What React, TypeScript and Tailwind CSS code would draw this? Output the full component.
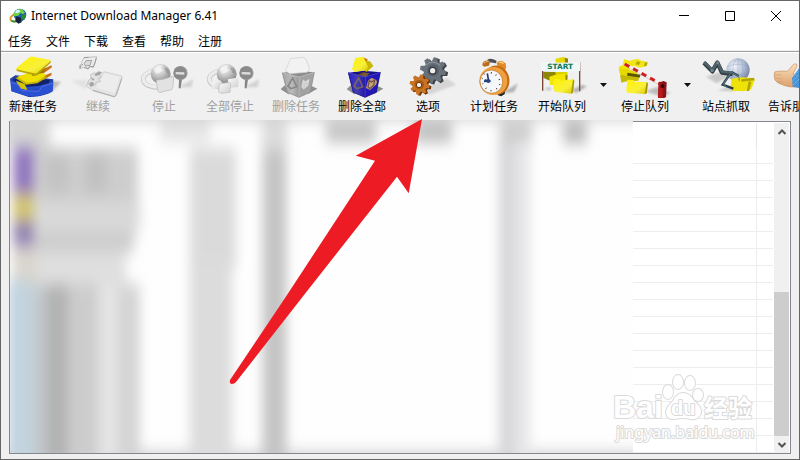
import type { ReactNode } from "react"

const MENU = ["任务", "文件", "下载", "查看", "帮助", "注册"]

interface IconProps {
    viewBox: string
    children: ReactNode
}

function ToolIcon({ viewBox, children }: IconProps) {
    return (
        <svg viewBox={viewBox} className="h-11 w-[60px] shrink-0" aria-hidden="true">
            {children}
        </svg>
    )
}

// gradients and filters shared by all the drawings
function SharedDefs() {
    return (
        <svg className="absolute size-0" aria-hidden="true">
            <defs>
                <linearGradient id="yellow" x1="0" y1="0" x2="1" y2="1">
                    <stop offset="0" stopColor="#fff200" />
                    <stop offset="0.6" stopColor="#f8f03a" />
                    <stop offset="1" stopColor="#d9c400" />
                </linearGradient>
                <linearGradient id="blue" x1="0" y1="0" x2="0" y2="1">
                    <stop offset="0" stopColor="#1c3a9c" />
                    <stop offset="0.5" stopColor="#2a52d0" />
                    <stop offset="1" stopColor="#1a36a8" />
                </linearGradient>
                <linearGradient id="paper" x1="0" y1="0" x2="1" y2="1">
                    <stop offset="0" stopColor="#fbfbfb" />
                    <stop offset="1" stopColor="#cfcfcf" />
                </linearGradient>
                <radialGradient id="ball" cx="0.4" cy="0.25" r="0.75">
                    <stop offset="0" stopColor="#f4f4f4" />
                    <stop offset="0.5" stopColor="#c2c2c2" />
                    <stop offset="1" stopColor="#858585" />
                </radialGradient>
                <linearGradient id="greyGlass" x1="0" y1="0" x2="1" y2="0">
                    <stop offset="0" stopColor="#a6a6a6" />
                    <stop offset="0.6" stopColor="#b9b9b9" />
                    <stop offset="1" stopColor="#969696" />
                </linearGradient>
                <linearGradient id="blueGlass" x1="0" y1="0" x2="1" y2="0">
                    <stop offset="0" stopColor="#2416c8" />
                    <stop offset="0.5" stopColor="#3a36b8" />
                    <stop offset="1" stopColor="#1c10a0" />
                </linearGradient>
                <radialGradient id="globe" cx="0.35" cy="0.35" r="0.75">
                    <stop offset="0" stopColor="#f2f5fb" />
                    <stop offset="0.5" stopColor="#b7c2d8" />
                    <stop offset="1" stopColor="#6d7c9e" />
                </radialGradient>
                <linearGradient id="skin" x1="0" y1="0" x2="0" y2="1">
                    <stop offset="0" stopColor="#fbe0bd" />
                    <stop offset="1" stopColor="#dca06c" />
                </linearGradient>
                <filter id="soft" x="-50%" y="-50%" width="200%" height="200%">
                    <feGaussianBlur stdDeviation="3" />
                </filter>
                <filter id="haze" x="-50%" y="-50%" width="200%" height="200%">
                    <feGaussianBlur stdDeviation="6 8" />
                </filter>
            </defs>
        </svg>
    )
}

function AppLogo() {
    return (
        <svg viewBox="24 21 54 48" className="h-4 w-[18px]" aria-hidden="true">
            <path d="M40 40Q24 48 30 58q12 8 26-2" fill="none" stroke="#d9a030" strokeWidth="6" />
            <path d="M31 59q12 7 24-3" fill="none" stroke="#2a9a3a" strokeWidth="5" />
            <circle cx="57" cy="42" r="19" fill="#1d62b0" />
            <path d="M40 34Q48 22 62 24l10 10-6 6-8-4-6 8-12 2-3-4Z" fill="#6fd044" />
            <path d="M64 42l11-4q-1 14-10 20l-6-8Z" fill="#2b8c32" />
            <path d="M46 28q8-4 12 3l-8 6-8-2Z" fill="#d7f3ff" />
            <path d="M46 46l14 4 2 14-10 4-9-8Z" fill="#14213c" />
        </svg>
    )
}

function AddIcon() {
    return (
        <ToolIcon viewBox="9 12 180 132">
            <path d="M150 92l34 4-30 30-40 8Z" fill="#8f8f8f" opacity="0.55" filter="url(#soft)" />
            <path d="M30 86L46 76 160 88 158 124Q152 130 120 138 90 142 84 140L34 124Z" fill="url(#blue)" />
            <path d="M38 90L56 80 150 90 146 100 116 108 84 110 62 106Z" fill="#12226b" />
            <path d="M120 62l34-16 2 6-28 20ZM122 82l32-14 1 7-26 16Z" fill="#c96f14" />
            <path d="M46 84l52-16 44 14-30 18-34 4Z" fill="#c9b800" />
            <path d="M52 80l52-18 36 12-28 20-32 4Z" fill="#efe000" />
            <path d="M48 92l26 10 8 18-24-5Z" fill="#d6c500" />
            <path d="M92 66l44-12-8 14-30 10Z" fill="#8c7a00" />
            <path d="M49 54L88 22Q96 18 102 21L150 29Q154 31 151 34L114 69Q110 73 106 72L52 60Q46 58 49 54Z" fill="url(#yellow)" />
            <path d="M50 58l58 13 44-38 1 4-43 40-60-14Z" fill="#b8a500" />
            <path d="M32 94l22 8 12 18 50 2 10-15 34-10-2 26-38 14-34 2-50-15Z" fill="#2b50d2" />
            <path d="M34 97l20 7 12 18 50 2 10-15 32-9" fill="none" stroke="#5e80ec" strokeWidth="2" />
        </ToolIcon>
    )
}

function ResumeIcon() {
    return (
        <ToolIcon viewBox="204 12 180 132">
            <path d="M260 88l-48 4 46 26Z" fill="#cfcfcf" opacity="0.4" filter="url(#soft)" />
            <path d="M312 65l54 13q2 2 0 6l-17 52q-3 6-9 4l-62-18-20-14 8-14 28-4 8-16Z" fill="#e4e4e4" stroke="#c6c6c6" strokeWidth="2" />
            <path d="M314 69l46 11-16 48-56-15 12-20Z" fill="#ececec" />
            <path d="M365 86l-17 50q-3 5-9 3l-60-18" fill="none" stroke="#ababab" strokeWidth="3" />
            <path d="M252 23l38-3-4 16-6 16-12-3-4 8-14-5-10 4-3-8 8-8 2-8Z" fill="#ececec" stroke="#c2c2c2" strokeWidth="3" />
            <path d="M240 56l2-9 7-4M252 23l14-1M289 24l-4 13-5 14-10-2-5 7-12-4" fill="none" stroke="#9a9a9a" strokeWidth="3" />
            <path d="M258 32l17-1-5 15-14 2-3-8Z" fill="#dcdcdc" stroke="#a2a2a2" strokeWidth="3" />
            <path d="M272 74l12-6 4 8 10-3 6 8-10 5 8 8-14 3-4 10-9-8-12 4 2-12 8-4Z" fill="#e2e2e2" stroke="#b6b6b6" strokeWidth="2" />
            <path d="M268 100q8-8 14 0l-2 8-10 2ZM284 72l12-8 10 3-8 8-12 3ZM272 82l12 6-6 4Z" fill="#a6a6a6" />
        </ToolIcon>
    )
}

interface StopIconProps {
    all?: boolean
}

function StopIcon({ all }: StopIconProps) {
    return (
        <ToolIcon viewBox="402 12 180 132">
            <path d="M536 112q24-14 44-24l-6 24Z" fill="#bdbdbd" opacity="0.6" filter="url(#soft)" />
            <path d="M458 62q-31 12-28 28 4 20 42 22" fill="none" stroke="#c2c2c2" strokeWidth="14" />
            <path d="M458 61q-31 12-28 28 4 20 42 22" fill="none" stroke="#ececec" strokeWidth="10" />
            <circle cx="482" cy="72" r="30" fill="url(#ball)" />
            <path d="M460 57l12-10 16-2-6 10 8 6-12 8-10 2Z" fill="#f6f6f6" opacity="0.75" />
            <path d="M492 52l12 4 6 16-10-2Z" fill="#8a8a8a" opacity="0.6" />
            {all ? (
                <>
                    <path d="M438 96l22-6 6 4v20l-24 4-4-3Z" fill="url(#paper)" />
                    <path d="M486 88l26-5 6 4-2 24-26 3-4-4Z" fill="url(#paper)" />
                    <path d="M460 102l30-5 4 4-2 26-26 3-8-4Z" fill="url(#paper)" stroke="#bababa" strokeWidth="2" />
                </>
            ) : (
                <path d="M472 90q18 0 44-11 5 0 5 5l-3 30q-1 5-6 6-18 3-33 8-5-1-6-7l-4-26q-1-5 3-5Z" fill="#e2e2e2" stroke="#b5b5b5" strokeWidth="2" />
            )}
            <path d="M537 88h9l-4 27h-6Z" fill="#858585" />
            <circle cx="542" cy="69" r="21" fill="#a6a6a6" />
            <circle cx="540" cy="69" r="20" fill="#8a8a8a" />
            <path d="M527 66l26 1v7l-26-1Z" fill="#dedede" />
        </ToolIcon>
    )
}

interface BinProps {
    colored?: boolean
}

function BinIcon({ colored }: BinProps) {
    const edge = colored ? "#110a78" : "#8d8d8d"
    const rim = colored ? "#4a42d8" : "#c6c6c6"
    const mark = colored ? "#7c6260" : "#878787"
    return (
        <ToolIcon viewBox="198 12 180 132">
            <path d="M254 106l-12 12 26 16ZM330 106l22 10-28 16Z" fill="#4d4d4d" opacity="0.6" />
            <path d="M247 68l46-6 50 5-14 60-32 15-36-15Z" fill={colored ? "#16108a" : "#8b8b8b"} />
            {colored ? (
                <>
                    <path d="M289 21l16 7-6 24-12 8Z" fill="#d6740c" />
                    <path d="M290 32l22 2 10 14-20 18-12-8Z" fill="#c8b600" />
                    <path d="M268 24l24-4 14 30-4 10-36 6-8-8Z" fill="url(#yellow)" />
                    <path d="M276 72q26-14 30 6l-10 14-20-4Z" fill="#573820" />
                </>
            ) : (
                <path d="M256 62l16-36 38-4q4 0 7 5l12 28-8 12-52 4Z" fill="#f2f2f2" stroke="#cdcdcd" strokeWidth="2" />
            )}
            <path d="M247 68l51 13-1 61-35-15Z" fill="url(#greyGlass)" />
            <path d="M298 81l45-14-12 60-34 15Z" fill="#a2a2a2" />
            {colored && (
                <>
                    <path d="M247 68l51 13-1 61-35-15Z" fill="url(#blueGlass)" opacity="0.94" />
                    <path d="M298 81l45-14-12 60-34 15Z" fill="#2319b8" />
                    <path d="M306 92q12-14 18-4 14 2 6 16l-18 16-12-6Z" fill="#c3a06a" />
                    <path d="M282 74l12-6 18 2-14 11Z" fill="#7a5a38" />
                </>
            )}
            <path d="M264 108l14-24 12 26-18 6Z" fill="none" stroke={mark} strokeWidth="5" />
            <path d="M306 110l4-18 6 4 10-6-3 16-12 10Z" fill={colored ? "#c9a773" : "#d0d0d0"} stroke={colored ? "#6c5250" : "#d8d8d8"} strokeWidth="4" />
            <path d="M247 68l51 13 45-14M298 81l-1 61" fill="none" stroke={rim} strokeWidth="2" />
            <path d="M247 68l15 59 35 15 34-15 12-60" fill="none" stroke={edge} strokeWidth="2" />
        </ToolIcon>
    )
}

const TEETH = [0, 45, 90, 135, 180, 225, 270, 315]

interface GearProps {
    cx: number
    cy: number
    r: number
    fill: string
}

function Gear({ cx, cy, r, fill }: GearProps) {
    return (
        <g transform={`translate(${cx} ${cy})`} fill={fill}>
            {TEETH.map((a) => (
                <path
                    key={a}
                    d={`M${-r * 0.24} ${-r * 0.6}L${-r * 0.15} ${-r}H${r * 0.15}L${r * 0.24} ${-r * 0.6}Z`}
                    transform={`rotate(${a + 12})`}
                />
            ))}
            <circle r={r * 0.73} />
        </g>
    )
}

function OptionsIcon() {
    return (
        <ToolIcon viewBox="-6 12 180 132">
            <path d="M70 116L140 84l28 20-80 30Z" fill="#bbb" opacity="0.5" filter="url(#soft)" />
            <Gear cx={105} cy={64} r={39} fill="#3c434b" />
            <Gear cx={99} cy={61} r={39} fill="#69717a" />
            <circle cx="99" cy="61" r="18" fill="#59616a" />
            <circle cx="98" cy="62" r="10" fill="#eeeeee" stroke="#343b43" strokeWidth="4" />
            <path d="M77 46q20-20 44 0" stroke="#8f979f" strokeWidth="3" fill="none" />
            <Gear cx={64} cy={107} r={30} fill="#6e3808" />
            <Gear cx={59} cy={104} r={30} fill="#c87424" />
            <circle cx="58" cy="104" r="14" fill="#a9580f" />
            <circle cx="57" cy="105" r="8" fill="#eeeeee" stroke="#6e3808" strokeWidth="3" />
        </ToolIcon>
    )
}

function SchedulerIcon() {
    return (
        <ToolIcon viewBox="192 12 180 132">
            <path d="M304 130l50-30-12 26Z" fill="#888" opacity="0.6" filter="url(#soft)" />
            <path d="M294 122l22-4-2 14-10 7-10-3Z" fill="#1f242e" />
            <path d="M262 30q8-8 28 2l-2 8-24-4Z" fill="#4b5058" />
            <path d="M247 46q0-18 24-14l-4 15-14 3Z" fill="#b86c1c" />
            <path d="M252 40q5-7 14-6" stroke="#f0b86c" strokeWidth="3" fill="none" />
            <path d="M290 38q14-12 26 2 6 14-2 20l-22-12Z" fill="#e08a28" />
            <path d="M298 38q8-4 12 4" stroke="#ffd28a" strokeWidth="4" fill="none" />
            <ellipse cx="290" cy="90" rx="38" ry="44" fill="#c26c14" transform="rotate(-12 290 90)" />
            <ellipse cx="280" cy="93" rx="42" ry="42" fill="#f0a040" />
            <ellipse cx="274" cy="95" rx="34" ry="35" fill="#f6f7fa" stroke="#c27420" strokeWidth="2" transform="rotate(-20 274 95)" />
            <path d="M266 94L262 70M266 94l-12-5M252 94l20-1" stroke="#203c86" strokeWidth="5" fill="none" />
            <circle cx="265" cy="93" r="6" fill="#28427e" />
            <path d="M274 66v5M289 73l-2 4M300 88l-4 1M301 104l-4-1M291 118l-2-4M273 124v-4M257 117l2-4M247 102l3-2M245 84l3 2M251 70l2 4" stroke="#444" strokeWidth="3" />
        </ToolIcon>
    )
}

function StartQueueIcon() {
    return (
        <ToolIcon viewBox="396 12 180 132">
            <path d="M518 118l30-14 12 6-34 20ZM430 118l20-6 4 8Z" fill="#888" opacity="0.6" filter="url(#soft)" />
            <path d="M466 26l24-5 14 4-4 12-32 4Z" fill="#e6d900" />
            <path d="M494 24l10 2v14l-8 2Z" fill="#8c8200" />
            <path d="M430 65h46l6 28-36-2-16-8Z" fill="#8d8607" />
            <path d="M466 66h36l2 20-36 2Z" fill="#ded100" />
            <path d="M448 80l16-5 30-4 6 6v26l-50 2Z" fill="#f2e600" />
            <path d="M496 76l6-2v28l-4 2Z" fill="#978b00" />
            <path d="M460 94l4-6 14-1 4 5 37-4 4 5-4 35-6 3-48-6-5-8Z" fill="url(#yellow)" />
            <path d="M519 88l4 4-4 36-6 3Z" fill="#a89900" />
            <path d="M428 36v86M539 36v88" stroke="#7b4437" strokeWidth="4" />
            <path d="M422 34q60 8 119 1l-1 28q-60 6-116 0Z" fill="#eef8f4" />
            <text x="442" y="57" fontSize="22" fontWeight="700" fill="#0c7a5c" fontFamily="DejaVu Sans">START</text>
        </ToolIcon>
    )
}

function StopQueueIcon() {
    return (
        <ToolIcon viewBox="45 12 180 132">
            <path d="M136 124l34-12 40 16-20 14Z" fill="#999" opacity="0.6" filter="url(#soft)" />
            <path d="M92 31l22-5 6 5 24 5-6 6 4 6-24 5-26-10Z" fill="#f0e41a" />
            <path d="M112 34l10 3-6 8-10-2ZM134 38l9-1-3 10-8 2Z" fill="#b8a800" />
            <path d="M72 28l18 4 10 16-16 12-26 8-2-18 12-4Z" fill="#f2e600" />
            <path d="M58 56l22 0 30 10 2 12-40 4-12-10Z" fill="#e6d900" />
            <path d="M82 68l40 6-4 10-36-6Z" fill="#5b5600" />
            <path d="M60 74l22 4 34 4v10l-36 2-16 4Z" fill="#c6b800" />
            <path d="M82 89l18 1 4 5 36 1 3 4-2 28-6 4-54-4-2-6Z" fill="url(#yellow)" />
            <path d="M140 96l4 4-4 30-6 2Z" fill="#a39300" />
            <path d="M74 42L186 104" stroke="#f5f0ec" strokeWidth="9" />
            <path d="M74 42L186 104" stroke="#d51a1f" strokeWidth="9" strokeDasharray="16 13" />
            <path d="M74 47L184 108" stroke="#a88" strokeWidth="1" />
            <path d="M176 98l14-5 10 4-2 44-10 6-14-4Z" fill="#8b1216" />
            <path d="M176 98l12 3v46l-14-4Z" fill="#b81a1c" />
            <circle cx="187" cy="108" r="6" fill="#3c0a0a" />
        </ToolIcon>
    )
}

function GrabberIcon() {
    return (
        <ToolIcon viewBox="288 12 180 132">
            <path d="M318 80l44-14 28 12-40 22ZM352 122l40-14 12 16Z" fill="#999" opacity="0.45" filter="url(#soft)" />
            <circle cx="414" cy="60" r="35" fill="url(#globe)" />
            <ellipse cx="414" cy="60" rx="15" ry="34" fill="none" stroke="#8797b8" strokeWidth="1" />
            <path d="M381 50q34-14 66 0M381 68q34 14 66 0M414 26v68" fill="none" stroke="#8797b8" strokeWidth="1" />
            <path d="M394 86l24-4 42 2 4 6-10 28-24 6-34-2-4-8Z" fill="#efe208" />
            <path d="M424 88l38-5 2 8-40 4Z" fill="#b0a200" />
            <path d="M446 94l8 2-6 26-8 2Z" fill="#b3a500" />
            <path d="M312 38L337 64 352 38 366 68 398 72" fill="none" stroke="#2d3c42" strokeWidth="13" strokeLinejoin="round" />
            <path d="M312 36L337 61 352 36 366 65 396 69" fill="none" stroke="#4e6269" strokeWidth="8" strokeLinejoin="round" />
            <path d="M394 66l22 12M390 72L368 104l32 12" fill="none" stroke="#263d45" strokeWidth="7" />
            <path d="M392 66l24 12 2 14M390 72l-20 30 12 12" fill="none" stroke="#628087" strokeWidth="3" />
            <circle cx="336" cy="62" r="5" fill="#75878e" />
            <circle cx="353" cy="39" r="4" fill="#75878e" />
        </ToolIcon>
    )
}

function TellFriendIcon() {
    return (
        <ToolIcon viewBox="486 12 180 132">
            <path d="M524 66q10-4 38-2l18-20q5-5 10-1 3 4-2 11l-9 18 20 6v32q-30 4-52-6-16-4-22-14-4-12-1-24Z" fill="url(#skin)" stroke="#c48f62" strokeWidth="2" />
            <path d="M525 74l20 1M526 84l20 2M532 94l18 2" stroke="#d09c6e" strokeWidth="2" />
            <path d="M576 84l20-28 22-8v70l-40-8Z" fill="#4a93d4" />
            <path d="M580 80l20-22M578 92l24-24M580 104l24-24" stroke="#93cbf2" strokeWidth="3" strokeDasharray="4 3" />
        </ToolIcon>
    )
}

interface ToolProps {
    label: string
    icon: ReactNode
    size?: string
    disabled?: boolean
}

function Tool({ label, icon, size = "w-[66px]", disabled }: ToolProps) {
    return (
        <button
            type="button"
            disabled={disabled}
            className={`flex shrink-0 flex-col items-center whitespace-nowrap text-xs leading-[18px] text-black disabled:text-[#a0a0a0] ${size}`}
        >
            {icon}
            {label}
        </button>
    )
}

function QueueMenu({ label }: { label: string }) {
    return (
        <button type="button" aria-label={label} className="flex w-3 shrink-0 items-center justify-center">
            <svg viewBox="0 0 7 4" className="h-1 w-[7px]" aria-hidden="true">
                <path d="M0 0h7L3.500 4Z" fill="#111" />
            </svg>
        </button>
    )
}

function TitleBar() {
    return (
        <header className="flex h-[30px] shrink-0 items-center bg-white pl-2">
            <AppLogo />
            <h1 className="flex-1 truncate pl-1 text-xs text-black">Internet Download Manager 6.41</h1>
            <button type="button" aria-label="Minimize" className="flex h-full w-[46px] items-center justify-center">
                <svg viewBox="0 0 10 10" className="size-2.5" aria-hidden="true">
                    <path d="M0 4h10v1H0Z" />
                </svg>
            </button>
            <button type="button" aria-label="Maximize" className="flex h-full w-[46px] items-center justify-center">
                <svg viewBox="0 0 10 10" className="size-2.5" aria-hidden="true">
                    <path d="M0.500 0.500h9v9h-9Z" fill="none" stroke="#000" />
                </svg>
            </button>
            <button type="button" aria-label="Close" className="flex h-full w-[46px] items-center justify-center">
                <svg viewBox="0 0 10 10" className="size-2.5" aria-hidden="true">
                    <path d="M0 0L10 10M10 0L0 10" stroke="#000" />
                </svg>
            </button>
        </header>
    )
}

function Toolbar() {
    return (
        <div className="flex shrink-0 overflow-hidden border-t border-white pt-px pb-[5px]">
            <Tool label="新建任务" icon={<AddIcon />} size="w-16" />
            <Tool label="继续" icon={<ResumeIcon />} disabled />
            <Tool label="停止" icon={<StopIcon />} disabled />
            <Tool label="全部停止" icon={<StopIcon all />} disabled />
            <Tool label="删除任务" icon={<BinIcon />} disabled />
            <Tool label="删除全部" icon={<BinIcon colored />} />
            <Tool label="选项" icon={<OptionsIcon />} />
            <Tool label="计划任务" icon={<SchedulerIcon />} />
            <Tool label="开始队列" icon={<StartQueueIcon />} size="w-[70px]" />
            <QueueMenu label="开始队列菜单" />
            <Tool label="停止队列" icon={<StopQueueIcon />} size="w-[72px]" />
            <QueueMenu label="停止队列菜单" />
            <Tool label="站点抓取" icon={<GrabberIcon />} />
            <Tool label="告诉朋友" icon={<TellFriendIcon />} />
        </div>
    )
}

// file names are censored with a heavy blur
function BlurredCells() {
    return (
        <svg viewBox="10 120 623 333" className="absolute -top-0.5 left-0 h-[333px] w-[623px] overflow-hidden" aria-hidden="true">
            <rect x="10" y="120" width="623" height="333" fill="#fefefe" />
            <g filter="url(#haze)">
                <rect x="0" y="104" width="640" height="16" fill="#d0d0d0" />
                <rect x="0" y="453" width="640" height="16" fill="#c8c8c8" />
                <rect x="4" y="114" width="46" height="34" fill="#d6d6d6" />
                <rect x="160" y="120" width="50" height="22" fill="#e4e4e4" />
                <rect x="326" y="123" width="50" height="19" fill="#c0c0c0" />
                <rect x="414" y="123" width="38" height="19" fill="#bababa" />
                <rect x="500" y="123" width="32" height="20" fill="#c8c8c8" />
                <rect x="563" y="123" width="24" height="20" fill="#b6b6b6" />
                <rect x="36" y="148" width="102" height="56" fill="#cdcdcd" />
                <rect x="46" y="152" width="22" height="40" fill="#c2c2c2" />
                <rect x="86" y="152" width="20" height="40" fill="#c0c0c0" />
                <rect x="36" y="202" width="104" height="30" fill="#d9d9d9" />
                <rect x="36" y="232" width="98" height="20" fill="#cccccc" />
                <rect x="34" y="252" width="92" height="36" fill="#dfdfdf" />
                <rect x="30" y="284" width="16" height="180" fill="#c3c9cc" />
                <rect x="46" y="284" width="24" height="180" fill="#b2b2b2" />
                <rect x="68" y="284" width="32" height="180" fill="#cccccc" />
                <rect x="98" y="284" width="20" height="180" fill="#e4e4e4" />
                <rect x="118" y="284" width="22" height="180" fill="#d4d4d4" />
                <rect x="190" y="148" width="46" height="120" fill="#dadada" />
                <rect x="190" y="260" width="42" height="206" fill="#dcdcdc" />
                <rect x="262" y="120" width="25" height="340" fill="#dcdcdc" />
                <rect x="263" y="150" width="23" height="314" fill="#c4c4c4" />
                <rect x="498" y="140" width="32" height="324" fill="#e6e6e8" />
                <rect x="500" y="140" width="14" height="324" fill="#d6d6d9" />
                <rect x="13" y="146" width="22" height="48" fill="#9378bd" />
                <rect x="13" y="194" width="22" height="27" fill="#d2c56e" />
                <rect x="13" y="221" width="22" height="26" fill="#9384b4" />
                <rect x="13" y="247" width="24" height="38" fill="#d9d5cd" />
                <rect x="8" y="280" width="24" height="184" fill="#c2d4df" />
            </g>
        </svg>
    )
}

function Pointer() {
    return (
        <svg viewBox="229 119 194 266" className="pointer-events-none absolute top-[-3px] left-[219px] h-[266px] w-[194px]" aria-hidden="true">
            <path d="M422 119L355.700 155.700 375 160.700 287 295 230 380Q229 384 232 384 234 384 236 382L304 295 397 176.700 408.700 193.300Z" fill="#ed1c24" />
        </svg>
    )
}

function Watermark() {
    return (
        <svg viewBox="608 370 152 76" className="pointer-events-none absolute right-[30px] bottom-[7px] h-[76px] w-[152px]" aria-hidden="true">
            <g fill="#fff" stroke="#dadada" strokeWidth="2" paintOrder="stroke" strokeLinejoin="round">
                <text x="613" y="418" fontSize="32" fontWeight="700" fontFamily="Liberation Sans">Bai</text>
                <path d="M683 393q7 0 11 8 8 6 7 12-2 7-10 6-8-2-16 0-8 1-9-6 0-6 7-12 4-8 10-8Z" />
                <ellipse cx="668" cy="392" rx="5" ry="7" />
                <ellipse cx="678" cy="382" rx="5" ry="7" />
                <ellipse cx="690" cy="383" rx="5" ry="7" />
                <ellipse cx="698" cy="395" rx="5" ry="6" />
                <text x="671" y="415" fontSize="20" fontWeight="700" fontFamily="Liberation Sans">du</text>
                <text x="704" y="417" fontSize="24" fontWeight="700" fontFamily="Noto Sans CJK SC">经验</text>
                <text x="616" y="438" fontSize="16" fontFamily="Noto Sans">jingyan.baidu.com</text>
            </g>
        </svg>
    )
}

function ScrollBar() {
    return (
        <div className="mr-px flex w-[15px] shrink-0 flex-col bg-[#f0f0f0]">
            <button type="button" aria-label="Scroll up" className="flex h-[17px] items-center justify-center">
                <svg viewBox="0 0 8 6" className="h-1.5 w-2" aria-hidden="true">
                    <path d="M0.500 5L4 1.500 7.500 5" fill="none" stroke="#555" strokeWidth="2" />
                </svg>
            </button>
            <div className="flex-1" />
            <div className="h-36 bg-[#cdcdcd]" />
            <button type="button" aria-label="Scroll down" className="flex h-[17px] items-center justify-center">
                <svg viewBox="0 0 8 6" className="h-1.5 w-2" aria-hidden="true">
                    <path d="M0.500 1L4 4.500 7.500 1" fill="none" stroke="#555" strokeWidth="2" />
                </svg>
            </button>
        </div>
    )
}

const ROWS = Array.from({ length: 18 }, (_, i) => i)

function DownloadList() {
    return (
        <main className="relative mx-2 mb-[5px] flex min-h-0 flex-1 border border-[#828790] bg-white pt-px">
            <div className="min-w-0 flex-1 overflow-hidden pr-px">
                <table className="w-full table-fixed border-separate border-spacing-0">
                    <thead>
                        <tr className="h-6">
                            <th className="border-r border-[#e5e5e5]" />
                            <th className="w-4" />
                        </tr>
                    </thead>
                    <tbody>
                        {ROWS.map((row) => (
                            <tr key={row} className="h-[17px]">
                                <td className="border-r border-b border-[#ededed]" />
                                <td className="border-b border-[#ededed]" />
                            </tr>
                        ))}
                    </tbody>
                </table>
            </div>
            <ScrollBar />
            <BlurredCells />
            <Watermark />
            <Pointer />
        </main>
    )
}

export default function App() {
    return (
        <div className="relative flex h-screen flex-col overflow-hidden border border-[#666] bg-[#f0f0f0] font-['Noto_Sans','Noto_Sans_CJK_SC',sans-serif]">
            <SharedDefs />
            <TitleBar />
            <nav className="flex h-5 shrink-0 items-center gap-3.5 border-b border-[#f0f0f0] bg-white pt-0.5 pl-[7px] text-xs leading-4 text-black">
                {MENU.map((item) => (
                    <button type="button" key={item}>{item}</button>
                ))}
            </nav>
            <hr className="shrink-0 border-[#a0a0a0]" />
            <Toolbar />
            <DownloadList />
        </div>
    )
}
